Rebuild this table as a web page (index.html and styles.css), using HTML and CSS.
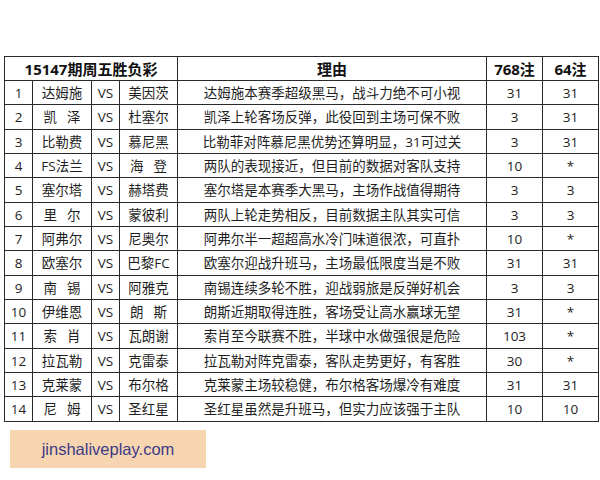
FILE: index.html
```html
<!DOCTYPE html>
<html lang="zh">
<head>
<meta charset="utf-8">
<link rel="stylesheet" href="styles.css">
</head>
<body>
<table class="lottery">
  <colgroup>
    <col class="c-no"><col class="c-team"><col class="c-vs"><col class="c-team2"><col class="c-reason"><col class="c-n1"><col class="c-n2">
  </colgroup>
  <thead>
    <tr>
      <th colspan="4">15147期周五胜负彩</th>
      <th>理由</th>
      <th>768注</th>
      <th>64注</th>
    </tr>
  </thead>
  <tbody>
    <tr><td>1</td><td>达姆施</td><td>VS</td><td>美因茨</td><td>达姆施本赛季超级黑马，战斗力绝不可小视</td><td>31</td><td>31</td></tr>
    <tr><td>2</td><td>凯<span class="gap"></span>泽</td><td>VS</td><td>杜塞尔</td><td>凯泽上轮客场反弹，此役回到主场可保不败</td><td>3</td><td>31</td></tr>
    <tr><td>3</td><td>比勒费</td><td>VS</td><td>慕尼黑</td><td>比勒菲对阵慕尼黑优势还算明显，31可过关</td><td>3</td><td>31</td></tr>
    <tr><td>4</td><td>FS法兰</td><td>VS</td><td>海<span class="gap"></span>登</td><td>两队的表现接近，但目前的数据对客队支持</td><td>10</td><td>*</td></tr>
    <tr><td>5</td><td>塞尔塔</td><td>VS</td><td>赫塔费</td><td>塞尔塔是本赛季大黑马，主场作战值得期待</td><td>3</td><td>3</td></tr>
    <tr><td>6</td><td>里<span class="gap"></span>尔</td><td>VS</td><td>蒙彼利</td><td>两队上轮走势相反，目前数据主队其实可信</td><td>3</td><td>3</td></tr>
    <tr><td>7</td><td>阿弗尔</td><td>VS</td><td>尼奥尔</td><td>阿弗尔半一超超高水冷门味道很浓，可直扑</td><td>10</td><td>*</td></tr>
    <tr><td>8</td><td>欧塞尔</td><td>VS</td><td>巴黎FC</td><td>欧塞尔迎战升班马，主场最低限度当是不败</td><td>31</td><td>31</td></tr>
    <tr><td>9</td><td>南<span class="gap"></span>锡</td><td>VS</td><td>阿雅克</td><td>南锡连续多轮不胜，迎战弱旅是反弹好机会</td><td>3</td><td>3</td></tr>
    <tr><td>10</td><td>伊维恩</td><td>VS</td><td>朗<span class="gap"></span>斯</td><td>朗斯近期取得连胜，客场受让高水赢球无望</td><td>31</td><td>*</td></tr>
    <tr><td>11</td><td>索<span class="gap"></span>肖</td><td>VS</td><td>瓦朗谢</td><td>索肖至今联赛不胜，半球中水做强很是危险</td><td>103</td><td>*</td></tr>
    <tr><td>12</td><td>拉瓦勒</td><td>VS</td><td>克雷泰</td><td>拉瓦勒对阵克雷泰，客队走势更好，有客胜</td><td>30</td><td>*</td></tr>
    <tr><td>13</td><td>克莱蒙</td><td>VS</td><td>布尔格</td><td>克莱蒙主场较稳健，布尔格客场爆冷有难度</td><td>31</td><td>31</td></tr>
    <tr><td>14</td><td>尼<span class="gap"></span>姆</td><td>VS</td><td>圣红星</td><td>圣红星虽然是升班马，但实力应该强于主队</td><td>10</td><td>10</td></tr>
  </tbody>
</table>
<div class="watermark">jinshaliveplay.com</div>
</body>
</html>
```

FILE: styles.css
```css
html, body {
  margin: 0;
  padding: 0;
  background: #ffffff;
}

body {
  padding: 56px 0 0 4px;
  font-family: "Open Sans", "Noto Sans CJK SC", sans-serif;
  color: #1e1e1e;
}

.lottery {
  border-collapse: collapse;
  table-layout: fixed;
  width: 594px;
}

.c-no { width: 28px; }
.c-team { width: 59px; }
.c-vs { width: 28px; }
.c-team2 { width: 58px; }
.c-reason { width: 309px; }
.c-n1 { width: 56px; }
.c-n2 { width: 56px; }

.lottery th,
.lottery td {
  border: 1px solid #2a2a2a;
  padding: 0;
  text-align: center;
  white-space: nowrap;
  overflow: hidden;
}

.lottery th {
  height: 23px;
  font-size: 15px;
  font-weight: bold;
  line-height: 22px;
  color: #111;
}

.lottery td {
  height: 23px;
  font-size: 13.5px;
  line-height: 22px;
}

.lottery tbody tr:nth-child(3n+2) td {
  height: 24px;
}

.gap {
  display: inline-block;
  width: 10px;
}

.watermark {
  margin: 8px 0 0 6px;
  width: 196px;
  height: 38px;
  background: #f8d5b1;
  color: #3b3a86;
  font-family: "Liberation Sans", Arial, sans-serif;
  font-size: 16.5px;
  line-height: 38px;
  text-align: center;
}
```
